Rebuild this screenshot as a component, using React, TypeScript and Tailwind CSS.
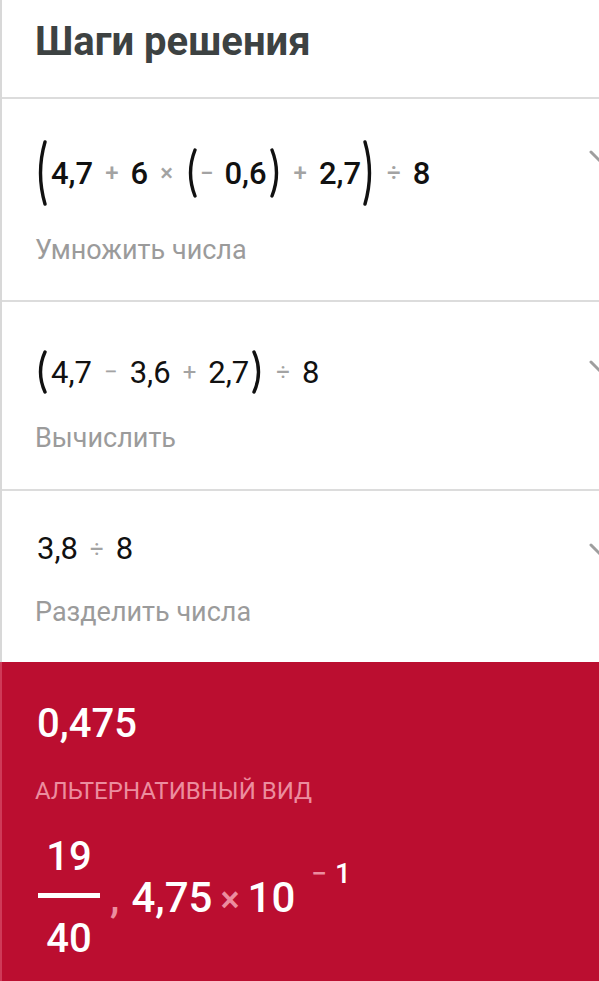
import type { ReactNode } from "react";

function Paren({ h, side }: { h: number; side: "l" | "r" }) {
  const d = side === "l" ? `M10 2 Q 1 ${h / 2} 10 ${h - 2}` : `M2 2 Q 11 ${h / 2} 2 ${h - 2}`;
  return (
    <svg width="12" height={h} viewBox={`0 0 12 ${h}`} className="shrink-0">
      <path d={d} fill="none" stroke="#111" strokeWidth="3.4" strokeLinecap="round" />
    </svg>
  );
}

function Op({ children, tight }: { children: ReactNode; tight?: boolean }) {
  return (
    <span className={`text-[24px] text-[#a3a3a3] leading-none ${tight ? "ml-[3px] mr-[11px]" : "mx-[12px]"}`}>
      {children}
    </span>
  );
}

function Chevron() {
  return (
    <svg width="26" height="16" viewBox="0 0 26 16" className="shrink-0 -mr-[16px] mt-[10px]">
      <path d="M2 2 L13 13 L24 2" fill="none" stroke="#9e9e9e" strokeWidth="3" strokeLinecap="round" />
    </svg>
  );
}

export default function App() {
  return (
    <div className="w-[599px] h-[981px] overflow-hidden bg-white font-['Roboto',sans-serif]">
      <div className="border-l-2 border-[#d8d8d8]">
        <div className="h-[97px] pl-[33px] pt-[22px]">
          <h1 className="text-[40px] leading-none font-bold text-[#3d4242]">Шаги решения</h1>
        </div>

        <div className="h-[203px] border-t-2 border-[#dcdcdc] pl-[33px] pt-[41px]">
          <div className="flex items-start justify-between">
            <div className="flex items-center h-[66px] text-[31px] leading-none font-medium text-[#111]">
              <Paren h={66} side="l" />
              <span className="ml-[4px]">4,7</span>
              <Op>+</Op>
              <span>6</span>
              <Op>×</Op>
              <Paren h={50} side="l" />
              <Op tight>−</Op>
              <span>0,6</span>
              <span className="ml-[3px]"><Paren h={50} side="r" /></span>
              <Op>+</Op>
              <span>2,7</span>
              <span className="ml-[2px]"><Paren h={66} side="r" /></span>
              <Op>÷</Op>
              <span>8</span>
            </div>
            <Chevron />
          </div>
          <div className="mt-[31px] text-[27px] leading-none text-[#9b9b9b]">Умножить числа</div>
        </div>

        <div className="h-[189px] border-t-2 border-[#dcdcdc] pl-[33px] pt-[48px]">
          <div className="flex items-start justify-between">
            <div className="flex items-center h-[44px] text-[31px] leading-none text-[#111]">
              <Paren h={44} side="l" />
              <span className="ml-[4px]">4,7</span>
              <Op>−</Op>
              <span>3,6</span>
              <Op>+</Op>
              <span>2,7</span>
              <span className="ml-[3px]"><Paren h={44} side="r" /></span>
              <Op>÷</Op>
              <span>8</span>
            </div>
            <Chevron />
          </div>
          <div className="mt-[31px] text-[27px] leading-none text-[#9b9b9b]">Вычислить</div>
        </div>

        <div className="h-[173px] border-t-2 border-[#dcdcdc] pl-[35px] pt-[42px]">
          <div className="flex items-start justify-between">
            <div className="flex items-center h-[31px] text-[31px] leading-none text-[#111]">
              <span>3,8</span>
              <Op>÷</Op>
              <span>8</span>
            </div>
            <Chevron />
          </div>
          <div className="mt-[35px] -ml-[2px] text-[27px] leading-none text-[#9b9b9b]">Разделить числа</div>
        </div>
      </div>

      <div className="h-[321px] bg-[#bb0e30] border-l-2 border-[#cf3a58] pl-[33px] pt-[42px] text-white">
        <div className="text-[40px] leading-none font-medium ml-[2px]">0,475</div>
        <div className="mt-[35px] text-[24px] leading-none text-[#ec8d9f]">АЛЬТЕРНАТИВНЫЙ ВИД</div>
        <div className="mt-[34px] flex items-center font-medium">
          <div className="flex flex-col items-center w-[62px] ml-[3px] text-[40px] leading-none">
            <span>19</span>
            <span className="mt-[16px] h-[5px] w-[62px] bg-white" />
            <span className="mt-[21px]">40</span>
          </div>
          <div className="text-[42px] leading-none ml-[10px] whitespace-nowrap">
            <span className="text-[#ec8d9f]">,</span>
            <span className="ml-[12px]">4,75</span>
            <span className="mx-[8px] text-[36px] text-[#ec8d9f]">×</span>
            <span>10</span>
            <span className="relative -top-[29px] ml-[16px] text-[28px]">
              <span className="text-[#ec8d9f]">−</span>
              <span className="ml-[8px]">1</span>
            </span>
          </div>
        </div>
      </div>
    </div>
  );
}
